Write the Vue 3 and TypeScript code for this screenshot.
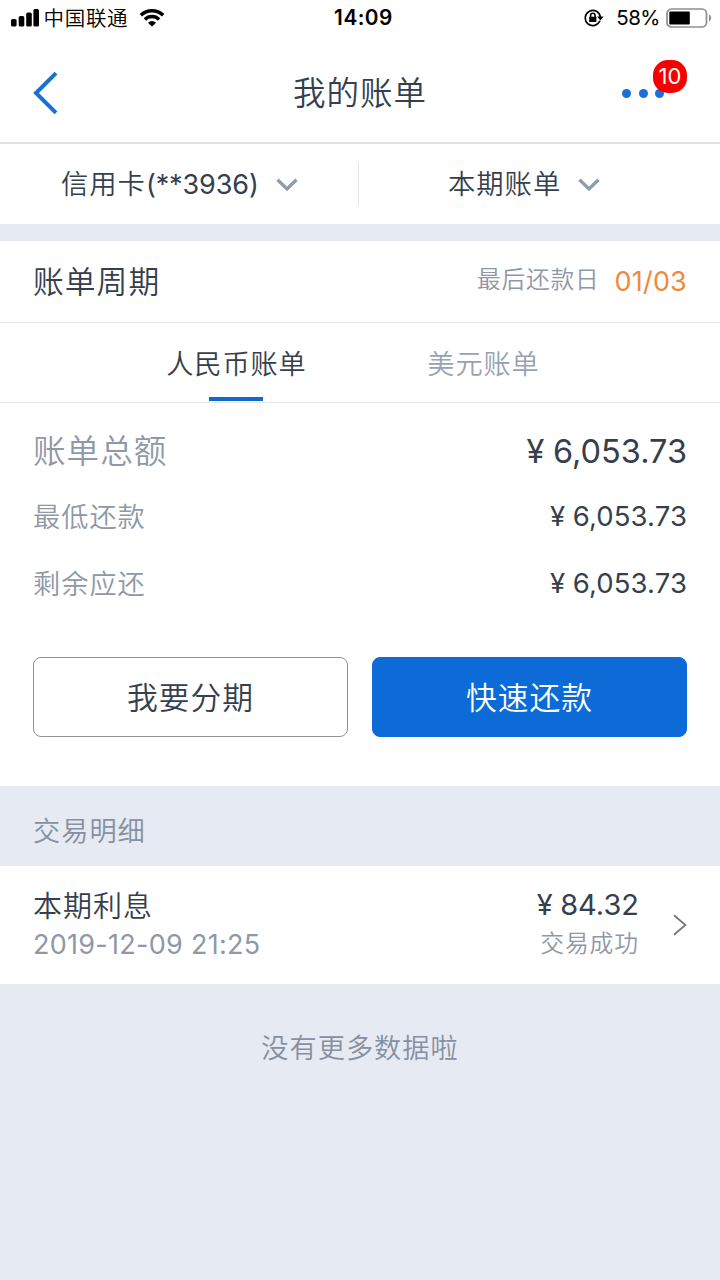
<script setup lang="ts">
interface Amount {
  label: string
  value: string
  major?: boolean
}

const amounts: Amount[] = [
  { label: '账单总额', value: '6,053.73', major: true },
  { label: '最低还款', value: '6,053.73' },
  { label: '剩余应还', value: '6,053.73' },
]
</script>

<template>
  <div class="screen">
    <div class="status">
      <div class="status-left">
        <svg class="signal" width="28" height="18" viewBox="0 0 28 18">
          <rect x="0" y="10" width="5.6" height="7.5" rx="1.6" />
          <rect x="7.7" y="7" width="5.6" height="10.5" rx="1.6" />
          <rect x="15.2" y="3.6" width="5.6" height="13.9" rx="1.6" />
          <rect x="22.4" y="0" width="5.6" height="17.5" rx="1.6" />
        </svg>
        <span class="carrier">中国联通</span>
        <svg class="wifi" width="26" height="18" viewBox="0 0 26 18">
          <path d="M1.9 6.3 A16 16 0 0 1 24.1 6.3" />
          <path d="M5.9 10.5 A10.2 10.2 0 0 1 20.1 10.5" />
          <path class="dot" d="M9 13.7 A5.8 5.8 0 0 1 17 13.7 L13 17.6 Z" />
        </svg>
      </div>
      <span class="time">14:09</span>
      <div class="status-right">
        <svg class="lock" width="20" height="18" viewBox="0 0 20 18">
          <path class="ring" d="M15.9 11.8 A7.6 7.6 0 1 1 16.4 8.2" />
          <path d="M13.2 7.6 L19.6 7.6 L16.4 11.4 Z" />
          <rect x="5.2" y="7.7" width="7.2" height="5.3" rx=".6" />
          <path class="shackle" d="M6.6 8 V6.4 A2.2 2.2 0 0 1 11 6.4 V8" />
        </svg>
        <span class="percent">58%</span>
        <svg class="battery" width="46" height="20" viewBox="0 0 46 20">
          <rect class="case" x="1" y="1" width="39.5" height="18" rx="4.6" />
          <rect x="3.3" y="3.6" width="20.5" height="12.8" rx="1" />
          <path class="tip" d="M43 6.3 Q45.2 7.3 45.2 10 Q45.2 12.7 43 13.7 Z" />
        </svg>
      </div>
    </div>

    <header class="header">
      <svg class="back" width="26" height="44" viewBox="0 0 26 44">
        <path d="M24 2.2 L4 22 L24 41.8" />
      </svg>
      <h1 class="title">我的账单</h1>
      <div class="more">
        <i class="more-dot"></i><i class="more-dot"></i><i class="more-dot"></i>
        <span class="badge">10</span>
      </div>
    </header>

    <div class="filters">
      <div class="filter card-filter">
        <span class="filter-text">信用卡<span class="latin">(**3936)</span></span>
        <svg class="chevron" width="22" height="14" viewBox="0 0 22 14"><path d="M1.5 1.8 L11 11 L20.5 1.8" /></svg>
      </div>
      <div class="divider"></div>
      <div class="filter period-filter">
        <span class="filter-text period">本期账单</span>
        <svg class="chevron" width="22" height="14" viewBox="0 0 22 14"><path d="M1.5 1.8 L11 11 L20.5 1.8" /></svg>
      </div>
    </div>

    <section class="bill">
      <div class="cycle">
        <span class="cycle-title">账单周期</span>
        <span class="due-label">最后还款日</span>
        <span class="due">01/03</span>
      </div>
      <nav class="tabs">
        <div class="tab active">人民币账单</div>
        <div class="tab">美元账单</div>
      </nav>
      <div class="amounts">
        <div v-for="a in amounts" :key="a.label" class="amount" :class="{ major: a.major }">
          <span class="amount-label">{{ a.label }}</span>
          <span class="money"><span class="yen">¥</span>{{ a.value }}</span>
        </div>
      </div>
      <div class="actions">
        <button class="btn">我要分期</button>
        <button class="btn primary">快速还款</button>
      </div>
    </section>

    <div class="section-title">交易明细</div>
    <div class="record">
      <div class="record-main">
        <div class="record-name">本期利息</div>
        <div class="record-date">2019-12-09 21:25</div>
      </div>
      <div class="record-side">
        <div class="record-money"><span class="yen">¥</span>84.32</div>
        <div class="record-state">交易成功</div>
      </div>
      <svg class="go" width="14" height="22" viewBox="0 0 14 22"><path d="M1 1.3 L12.4 11 L1 20.7" /></svg>
    </div>
    <div class="end">没有更多数据啦</div>
  </div>
</template>

<style>
body {
  margin: 0;
  background: #e5eaf3;
}
</style>

<style scoped>
.screen {
  width: 720px;
  height: 1280px;
  overflow: hidden;
  background: #e5eaf3;
  color: #353f4d;
  font-family: 'Noto Sans CJK SC', sans-serif;
  font-weight: 350;
  white-space: nowrap;
}
.status {
  display: grid;
  grid-template-columns: 1fr auto 1fr;
  align-items: center;
  height: 36px;
  background: #fff;
  color: #000;
}
.status-left {
  display: flex;
  align-items: center;
  height: 36px;
  padding-left: 10.5px;
}
.signal,
.wifi {
  margin-top: -1px;
}
.carrier {
  margin: -2px 0 0 5px;
  font-size: 20.5px;
  letter-spacing: 0.7px;
  font-weight: 350;
  line-height: 36px;
}
.wifi {
  margin-left: 11px;
  fill: none;
  stroke: #000;
  stroke-width: 3.5;
}
.wifi .dot {
  fill: #000;
  stroke: none;
}
.time {
  font: 600 20.8px/36px Inter, sans-serif;
  letter-spacing: 0.5px;
  padding-left: 7px;
}
.status-right {
  display: flex;
  align-items: center;
  justify-content: flex-end;
  height: 36px;
  padding-right: 8px;
}
.lock,
.battery {
  margin-top: -1px;
}
.lock .ring,
.lock .shackle {
  fill: none;
  stroke: #000;
  stroke-width: 1.6;
}
.percent {
  margin: 0 6px 0 12px;
  font: 400 20.5px/36px Inter, sans-serif;
  letter-spacing: -0.5px;
}
.battery .case {
  fill: none;
  stroke: #8e8e8e;
  stroke-width: 1.7;
}
.battery .tip {
  fill: #8e8e8e;
}
.header {
  box-sizing: border-box;
  display: grid;
  grid-template-columns: 100px 1fr 100px;
  align-items: center;
  height: 108px;
  padding-bottom: 6px;
  border-bottom: 2px solid #dfe1e5;
  background: #fff;
}
.back {
  margin: 14px 0 0 32px;
  fill: none;
  stroke: #1a70cf;
  stroke-width: 4;
}
.title {
  margin: 9px 0 0;
  text-align: center;
  font-size: 32.5px;
  font-weight: 350;
  line-height: 48px;
  letter-spacing: 1px;
}
.more {
  position: relative;
  display: flex;
  gap: 7.5px;
  margin: 14px 0 0 2px;
}
.more-dot {
  width: 9px;
  height: 9px;
  border-radius: 50%;
  background: #1a70d6;
}
.badge {
  position: absolute;
  left: 31px;
  top: -29px;
  width: 34px;
  height: 33px;
  border-radius: 15px;
  background: #f90000;
  color: #fff;
  text-align: center;
  font: 400 22px/33px Inter, sans-serif;
}
.filters {
  display: flex;
  align-items: center;
  height: 80px;
  background: #fff;
}
.filter {
  display: flex;
  align-items: center;
}
.card-filter {
  width: 298px;
  padding-left: 61px;
}
.period-filter {
  padding-left: 89px;
}
.divider {
  width: 1px;
  height: 44px;
  margin-left: -1px;
  background: #e2e4e8;
}
.filter-text {
  margin-top: -2px;
  font-size: 27.3px;
  letter-spacing: 1px;
  line-height: 40px;
}
.period {
  margin-top: -4px;
}
.latin {
  font-family: Inter, sans-serif;
  font-weight: 400;
  font-size: 27px;
  letter-spacing: -0.1px;
}
.chevron {
  margin: 1px 0 0 17px;
  fill: none;
  stroke: #929baa;
  stroke-width: 3.4;
}
.bill {
  margin-top: 17px;
  background: #fff;
}
.cycle {
  box-sizing: border-box;
  display: flex;
  align-items: center;
  height: 82px;
  padding: 0 33px;
  border-bottom: 1px solid #e6e7e9;
}
.cycle-title {
  flex: 1;
  margin-top: -4px;
  font-size: 30.8px;
  letter-spacing: 1px;
}
.due-label {
  margin: -7px 15px 0 0;
  color: #8f98a7;
  font-size: 23.7px;
  letter-spacing: 0.8px;
}
.due {
  color: #f1893a;
  font: 400 27px/40px Inter, sans-serif;
  letter-spacing: 0.2px;
}
.tabs {
  box-sizing: border-box;
  display: flex;
  justify-content: center;
  height: 80px;
  border-bottom: 1px solid #e6e7e9;
}
.tab {
  width: 247px;
  text-align: center;
  color: #98a2b4;
  font-size: 27.2px;
  letter-spacing: 0.9px;
  line-height: 78px;
}
.tab.active {
  position: relative;
  color: #353f4d;
}
.tab.active::after {
  content: '';
  position: absolute;
  left: 96px;
  bottom: 1px;
  width: 54px;
  height: 4px;
  background: #1369cb;
}
.amounts {
  padding: 14px 33px 0;
}
.amount {
  box-sizing: border-box;
  display: flex;
  align-items: center;
  justify-content: space-between;
  height: 67px;
  padding-bottom: 4px;
}
.amount-label {
  margin-top: -2px;
  color: #8f98a7;
  font-size: 27.2px;
  letter-spacing: 1px;
}
.money {
  font: 400 27.5px/40px Inter, sans-serif;
  letter-spacing: 0.1px;
}
.yen {
  margin-right: 7.5px;
}
.amount.major {
  padding-bottom: 2px;
}
.major .amount-label {
  font-size: 32.6px;
}
.major .money {
  padding-top: 5px;
  font-size: 32.5px;
  letter-spacing: 0;
}
.major .yen {
  margin-right: 8.5px;
}
.actions {
  display: flex;
  gap: 24px;
  padding: 39px 33px 49px;
}
.btn {
  box-sizing: border-box;
  flex: 1;
  height: 80px;
  padding: 0 0 2px;
  border: 1px solid #929292;
  border-radius: 8px;
  background: #fff;
  color: #353f4d;
  font: 350 30.8px/76px 'Noto Sans CJK SC', sans-serif;
  letter-spacing: 1px;
}
.btn.primary {
  border-color: #0d6bd7;
  background: #0d6bd7;
  color: #fff;
}
.section-title {
  height: 80px;
  padding-left: 33px;
  color: #8790a0;
  font-size: 27.2px;
  letter-spacing: 1px;
  line-height: 86px;
}
.record {
  display: flex;
  align-items: center;
  height: 118px;
  padding: 0 33px;
  background: #fff;
}
.record-main {
  flex: 1;
}
.record-name {
  margin-top: -1px;
  font-size: 29px;
  letter-spacing: 1px;
  line-height: 40px;
}
.record-date {
  padding-top: 1px;
  color: #8f98a7;
  font: 400 27px/40px Inter, sans-serif;
  letter-spacing: 0.28px;
}
.record-side {
  text-align: right;
  margin: -9px 34px 0 0;
}
.record-money {
  padding-top: 2px;
  font: 400 29px/40px Inter, sans-serif;
}
.record-state {
  color: #8f98a7;
  font-size: 23.8px;
  letter-spacing: 0.9px;
  line-height: 34px;
}
.go {
  fill: none;
  stroke: #777;
  stroke-width: 1.8;
}
.end {
  color: #8790a0;
  font-size: 27.2px;
  letter-spacing: 1px;
  line-height: 40px;
  text-align: center;
  padding-top: 42px;
}
</style>
